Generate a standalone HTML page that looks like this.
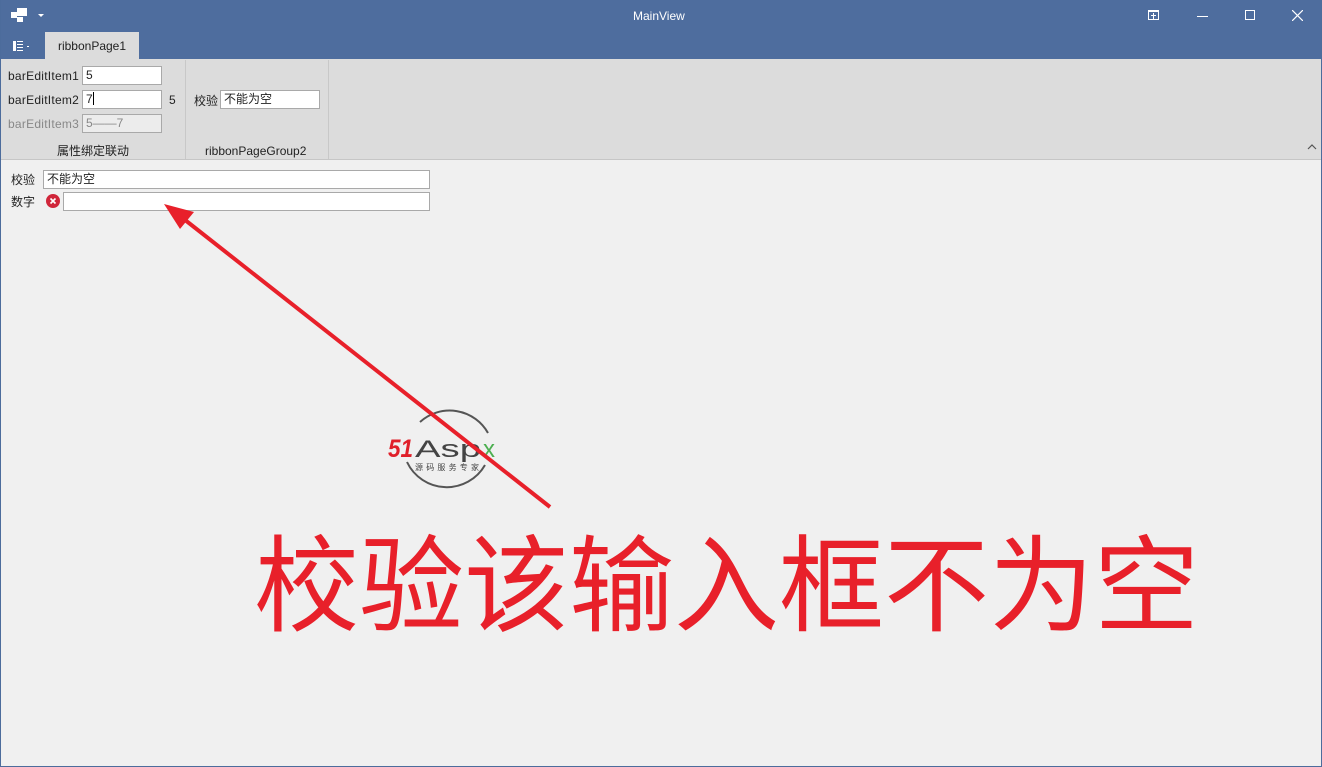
<!DOCTYPE html>
<html><head><meta charset="utf-8"><style>
*{margin:0;padding:0;box-sizing:border-box}
body{width:1322px;height:767px;overflow:hidden;background:#f0f0f0;font-family:"Liberation Sans","Noto Sans CJK SC",sans-serif;font-size:12px;color:#222;position:relative}
.abs{position:absolute}
.win{position:absolute;left:0;top:0;width:1322px;height:767px;border:1px solid #4c6c9c;border-top:none}
.title{left:0;top:0;width:1322px;height:59px;background:#4e6d9e}
.inp{position:absolute;background:#fff;border:1px solid #a9a9a9;height:19px;font-size:12px;padding-left:3px;line-height:17px}
.lbl{position:absolute;font-size:12px;line-height:14px}
</style></head><body>
<div class="abs title"></div>
<div class="abs" style="left:633px;top:9px;color:#fff;font-size:12px">MainView</div>
<div class="abs" style="left:17px;top:8px;width:10px;height:8px;background:#fff"></div>
<div class="abs" style="left:11px;top:12px;width:6px;height:6px;background:#fff"></div>
<div class="abs" style="left:17px;top:17px;width:6px;height:5px;background:#fff"></div>
<div class="abs" style="left:38px;top:14px;width:0;height:0;border-left:3px solid transparent;border-right:3px solid transparent;border-top:3px solid #fff"></div>
<div class="abs" style="left:1148px;top:10px;width:11px;height:10px;border:1px solid #fff;border-top-width:2px"></div>
<div class="abs" style="left:1153px;top:13px;width:1px;height:6px;background:#fff"></div>
<div class="abs" style="left:1151px;top:15px;width:5px;height:1px;background:#fff"></div>
<div class="abs" style="left:1197px;top:16px;width:11px;height:1px;background:#fff"></div>
<div class="abs" style="left:1245px;top:10px;width:10px;height:10px;border:1px solid #fff"></div>
<svg class="abs" style="left:1292px;top:10px" width="11" height="11"><path d="M0 0L11 11M11 0L0 11" stroke="#fff" stroke-width="1.2"/></svg>
<svg class="abs" style="left:13px;top:40px" width="20" height="12"><rect x="0" y="1" width="3" height="10" fill="#fff"/><path d="M4 1.5h6M4 4.5h6M4 7.5h6M4 10.5h6" stroke="#fff"/><rect x="14" y="6" width="2" height="1" fill="#fff"/></svg>
<div class="abs" style="left:45px;top:32px;width:94px;height:28px;background:#dcdcdc;text-align:center;line-height:28px;color:#222">ribbonPage1</div>
<div class="abs" style="left:1px;top:59px;width:1320px;height:101px;background:#dcdcdc;border-bottom:1px solid #c6c6c6"></div>
<div class="abs" style="left:185px;top:60px;width:1px;height:99px;background:#c8c8c8"></div>
<div class="abs" style="left:328px;top:60px;width:1px;height:99px;background:#c8c8c8"></div>
<div class="lbl" style="left:8px;top:69px;letter-spacing:0.25px">barEditItem1</div>
<div class="inp" style="left:82px;top:66px;width:80px">5</div>
<div class="lbl" style="left:8px;top:93px;letter-spacing:0.25px">barEditItem2</div>
<div class="inp" style="left:82px;top:90px;width:80px">7<span style="display:inline-block;width:1px;height:13px;background:#000;vertical-align:-2px"></span></div>
<div class="lbl" style="left:169px;top:93px">5</div>
<div class="lbl" style="left:8px;top:117px;color:#888;letter-spacing:0.25px">barEditItem3</div>
<div class="inp" style="left:82px;top:114px;width:80px;background:#ececec;color:#888">5——7</div>
<div class="lbl" style="left:57px;top:144px">属性绑定联动</div>
<div class="lbl" style="left:194px;top:94px">校验</div>
<div class="inp" style="left:220px;top:90px;width:100px">不能为空</div>
<div class="lbl" style="left:205px;top:144px">ribbonPageGroup2</div>
<svg class="abs" style="left:1307px;top:144px" width="10" height="6"><path d="M1 5L5 1L9 5" stroke="#555" fill="none" stroke-width="1.2"/></svg>
<div class="lbl" style="left:11px;top:173px">校验</div>
<div class="inp" style="left:43px;top:170px;width:387px">不能为空</div>
<div class="lbl" style="left:11px;top:195px">数字</div>
<svg class="abs" style="left:46px;top:194px" width="14" height="14"><circle cx="7" cy="7" r="7" fill="#d0263a"/><path d="M4.5 4.5L9.5 9.5M9.5 4.5L4.5 9.5" stroke="#fff" stroke-width="1.6"/></svg>
<div class="inp" style="left:63px;top:192px;width:367px"></div>
<svg class="abs" style="left:385px;top:400px" width="130" height="95">
<path d="M35 22A44 44 0 0 1 103 33" stroke="#555" stroke-width="2" fill="none"/>
<path d="M100 65A44 44 0 0 1 22 62" stroke="#555" stroke-width="2" fill="none"/>
<text x="3" y="57" font-family="Liberation Sans" font-style="italic" font-weight="bold" font-size="25" fill="#e0202a" textLength="25" lengthAdjust="spacingAndGlyphs">51</text>
<text x="30" y="57" font-family="Liberation Sans" font-size="24" fill="#444" textLength="66" lengthAdjust="spacingAndGlyphs">Asp</text>
<text x="98" y="57" font-family="Liberation Sans" font-size="24" fill="#4caf50">x</text>
<text x="30" y="70" font-family="Noto Sans CJK SC" font-size="8" fill="#444" textLength="64">源码服务专家</text>
</svg>
<svg class="abs" style="left:0;top:0" width="1322" height="767">
<line x1="550" y1="507" x2="180" y2="216" stroke="#e8202a" stroke-width="4"/>
<polygon points="164,204 194,212 180,229" fill="#e8202a"/>
</svg>
<div class="abs" style="left:254px;top:508px;font-family:'Noto Sans CJK SC',sans-serif;font-size:105px;line-height:140px;color:#e8202a;white-space:nowrap">校验该输入框不为空</div>
<div class="win"></div>
</body></html>
